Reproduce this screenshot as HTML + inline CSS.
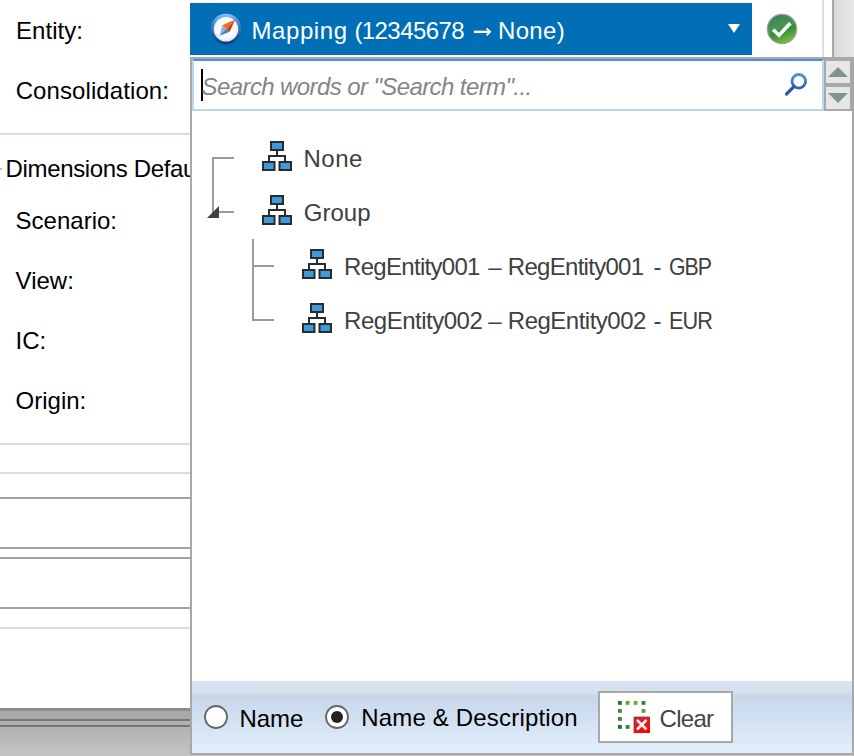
<!DOCTYPE html>
<html><head><meta charset="utf-8">
<style>
html,body{margin:0;padding:0;width:854px;height:756px;overflow:hidden;background:#fff;position:relative;font-family:"Liberation Sans",sans-serif;}
.a{position:absolute;}
.t{position:absolute;font-size:24px;line-height:24px;white-space:nowrap;}
.hl{position:absolute;left:0;width:190px;height:2px;}
</style></head><body>
<!-- left panel -->
<div class="t" style="left:16px;top:19px;color:#000;letter-spacing:0.05px">Entity:</div>
<div class="t" style="left:15.7px;top:79px;color:#000;letter-spacing:0.09px">Consolidation:</div>
<div class="hl" style="top:133px;background:#d5dee5"></div>
<div class="a" style="left:0;top:168px;width:2px;height:2px;background:#b8c4cc"></div>
<div class="t" style="left:5.6px;top:157px;color:#000;letter-spacing:-0.35px">Dimensions Defau</div>
<div class="t" style="left:15.6px;top:209px;color:#000">Scenario:</div>
<div class="t" style="left:15.6px;top:269px;color:#000">View:</div>
<div class="t" style="left:15.6px;top:329px;color:#000">IC:</div>
<div class="t" style="left:15.6px;top:389px;color:#000">Origin:</div>
<div class="hl" style="top:443px;background:#d5dee5"></div>
<div class="hl" style="top:472px;background:#d5dee5"></div>
<div class="hl" style="top:497px;background:#a2a2a2"></div>
<div class="hl" style="top:547px;background:#a2a2a2"></div>
<div class="hl" style="top:557px;background:#a2a2a2"></div>
<div class="hl" style="top:607px;background:#a2a2a2"></div>
<div class="hl" style="top:627px;background:#d5dee5"></div>
<div class="a" style="left:0;top:708px;width:190px;height:48px;background:linear-gradient(#8c8c8c 0,#8c8c8c 2.5px,#a9a9a9 3px,#a9a9a9 11px,#767676 11px,#767676 13px,#b0b0b0 13px,#b0b0b0 17px,#767676 17px,#767676 19px,#b2b2b2 19px,#c4c4c4 48px)"></div>

<!-- dropdown -->
<div class="a" style="left:190px;top:3px;width:562px;height:52px;background:#006fb6"></div>
<div class="t" style="left:251.4px;top:18.7px;color:#fff;letter-spacing:0.6px">Mapping</div>
<div class="t" style="left:354.4px;top:18.7px;color:#fff;letter-spacing:-0.575px">(12345678</div>
<svg class="a" style="left:473px;top:25px" width="19" height="14" viewBox="0 0 19 14"><path d="M0.8 6.85H17" stroke="#fff" stroke-width="2.4"/><path d="M13.6 3.4L17.2 6.85L13.6 10.3" fill="none" stroke="#fff" stroke-width="1.8"/></svg>
<div class="t" style="left:498.1px;top:18.7px;color:#fff;letter-spacing:0.3px">None)</div>
<svg class="a" style="left:209px;top:12px" width="34" height="34" viewBox="0 0 34 34">
<defs><linearGradient id="cg" x1="0" y1="0" x2="0" y2="1"><stop offset="0" stop-color="#8ec4f4"/><stop offset="0.35" stop-color="#3f82cc"/><stop offset="1" stop-color="#0b3a7a"/></linearGradient>
<radialGradient id="cw" cx="50%" cy="45%" r="55%"><stop offset="0" stop-color="#ffffff"/><stop offset="0.75" stop-color="#f6f9fd"/><stop offset="1" stop-color="#d4e4f4"/></radialGradient></defs>
<circle cx="17" cy="17" r="15.3" fill="url(#cg)"/>
<circle cx="17" cy="17.3" r="12.3" fill="url(#cw)"/>
<polygon points="17,17 26.2,7.6 20.8,19.8" fill="#c2480c"/>
<polygon points="17,17 26.2,7.6 13.3,13.3" fill="#f86a18"/>
<polygon points="17,17 10.6,23.8 13.3,13.3" fill="#8ab8ea"/>
<polygon points="17,17 10.6,23.8 20.8,19.8" fill="#4a7cc0"/>
</svg>
<svg class="a" style="left:766px;top:13px" width="32" height="32" viewBox="0 0 32 32">
<defs><linearGradient id="gg" x1="0.3" y1="0" x2="0.7" y2="1"><stop offset="0" stop-color="#3a8050"/><stop offset="0.45" stop-color="#4a9858"/><stop offset="0.55" stop-color="#2f8a35"/><stop offset="1" stop-color="#80c040"/></linearGradient></defs>
<circle cx="16" cy="16" r="15.3" fill="#8e8e8e" opacity="0.85"/>
<circle cx="16" cy="16" r="14" fill="url(#gg)"/>
<path d="M7.2 16.8L13 22.2L24.3 10.2" fill="none" stroke="#fff" stroke-width="3.6" stroke-linejoin="miter"/>
</svg>
<svg class="a" style="left:727px;top:23px" width="14" height="11"><polygon points="1,1 13,1 7,10" fill="#fff"/></svg>

<!-- right side -->
<div class="a" style="left:822px;top:0;width:2px;height:57px;background:#d4dfe6"></div>
<div class="a" style="left:832px;top:0;width:2px;height:57px;background:#a8a8a8"></div>
<div class="a" style="left:834px;top:0;width:20px;height:57px;background:linear-gradient(90deg,#d9d9d9,#e8e8e8)"></div>

<!-- popup -->
<div class="a" style="left:190px;top:57px;width:660px;height:694px;border:2px solid #a8a8a8;background:#fff"></div>
<div class="a" style="left:192px;top:59px;width:628px;height:48px;border:2px solid #b9d9ef;border-top-color:#4f8fc7;background:#fff"></div>
<div class="a" style="left:824px;top:59px;width:28px;height:52px;background:#a8a8a8"></div>
<div class="a" style="left:826px;top:61px;width:24px;height:22px;background:#e6e6e6"></div>
<div class="a" style="left:826px;top:87px;width:24px;height:22px;background:#e6e6e6"></div>
<svg class="a" style="left:826px;top:61px" width="24" height="48"><polygon points="2,16 22,16 12,6" fill="#7f9391"/><polygon points="2,32 22,32 12,42" fill="#7f9391"/></svg>
<svg class="a" style="left:782px;top:70px" width="28" height="28" viewBox="0 0 28 28">
<defs><linearGradient id="mg" x1="0" y1="0" x2="0" y2="1"><stop offset="0" stop-color="#4a98d8"/><stop offset="1" stop-color="#2f5fb8"/></linearGradient></defs>
<circle cx="16.8" cy="11.3" r="6.8" fill="none" stroke="url(#mg)" stroke-width="2.8"/>
<path d="M4.5 24L11.5 17" stroke="#2c58a8" stroke-width="3.2" stroke-linecap="round"/>
</svg>
<div class="a" style="left:201px;top:69px;width:2px;height:32px;background:#000"></div>
<div class="t" style="left:201.6px;top:75px;color:#858585;font-style:italic;letter-spacing:-0.6px">Search words or "Search term"...</div>


<!-- tree -->
<div class="a" style="left:212px;top:157px;width:2px;height:55px;background:#9a9a9a"></div>
<div class="a" style="left:212px;top:157px;width:22px;height:2px;background:#9a9a9a"></div>
<div class="a" style="left:212px;top:211px;width:22px;height:2px;background:#9a9a9a"></div>
<svg class="a" style="left:206px;top:205px" width="14" height="14"><polygon points="1,13 13,1 13,13" fill="#404040"/></svg>
<div class="a" style="left:252px;top:239px;width:2px;height:82px;background:#9a9a9a"></div>
<div class="a" style="left:252px;top:265px;width:22px;height:2px;background:#9a9a9a"></div>
<div class="a" style="left:252px;top:319px;width:22px;height:2px;background:#9a9a9a"></div>
<svg class="a" style="left:262px;top:141px" width="30" height="30" viewBox="0 0 30 30"><g fill="#3d9bdb" stroke="#2b2b2b" stroke-width="2"><rect x="9" y="1" width="12" height="8"/><rect x="1" y="21" width="11.5" height="8"/><rect x="17.5" y="21" width="11.5" height="8"/></g><g fill="#2b2b2b"><rect x="14" y="10" width="2" height="5"/><rect x="6" y="14" width="18" height="2"/><rect x="6" y="14" width="2" height="6"/><rect x="22" y="14" width="2" height="6"/></g></svg><svg class="a" style="left:262px;top:195px" width="30" height="30" viewBox="0 0 30 30"><g fill="#3d9bdb" stroke="#2b2b2b" stroke-width="2"><rect x="9" y="1" width="12" height="8"/><rect x="1" y="21" width="11.5" height="8"/><rect x="17.5" y="21" width="11.5" height="8"/></g><g fill="#2b2b2b"><rect x="14" y="10" width="2" height="5"/><rect x="6" y="14" width="18" height="2"/><rect x="6" y="14" width="2" height="6"/><rect x="22" y="14" width="2" height="6"/></g></svg><svg class="a" style="left:302px;top:249px" width="30" height="30" viewBox="0 0 30 30"><g fill="#3d9bdb" stroke="#2b2b2b" stroke-width="2"><rect x="9" y="1" width="12" height="8"/><rect x="1" y="21" width="11.5" height="8"/><rect x="17.5" y="21" width="11.5" height="8"/></g><g fill="#2b2b2b"><rect x="14" y="10" width="2" height="5"/><rect x="6" y="14" width="18" height="2"/><rect x="6" y="14" width="2" height="6"/><rect x="22" y="14" width="2" height="6"/></g></svg><svg class="a" style="left:302px;top:303px" width="30" height="30" viewBox="0 0 30 30"><g fill="#3d9bdb" stroke="#2b2b2b" stroke-width="2"><rect x="9" y="1" width="12" height="8"/><rect x="1" y="21" width="11.5" height="8"/><rect x="17.5" y="21" width="11.5" height="8"/></g><g fill="#2b2b2b"><rect x="14" y="10" width="2" height="5"/><rect x="6" y="14" width="18" height="2"/><rect x="6" y="14" width="2" height="6"/><rect x="22" y="14" width="2" height="6"/></g></svg>
<div class="t" style="left:303.5px;top:147px;color:#404040;letter-spacing:0.5px">None</div>
<div class="t" style="left:303.8px;top:201px;color:#404040">Group</div>
<div class="t" style="left:344.1px;top:255px;color:#404040;letter-spacing:-0.71px">RegEntity001</div>
<div class="t" style="left:488.2px;top:255px;color:#404040">–</div>
<div class="t" style="left:507.8px;top:255px;color:#404040;letter-spacing:-0.71px">RegEntity001</div>
<div class="t" style="left:653.6px;top:255px;color:#404040">-</div>
<div class="t" style="left:669.4px;top:255px;color:#404040;letter-spacing:-1.2px;transform:scaleX(0.888);transform-origin:0 0">GBP</div>
<div class="t" style="left:344.1px;top:309px;color:#404040;letter-spacing:-0.49px">RegEntity002</div>
<div class="t" style="left:488.2px;top:309px;color:#404040">–</div>
<div class="t" style="left:507.8px;top:309px;color:#404040;letter-spacing:-0.5px">RegEntity002</div>
<div class="t" style="left:653.6px;top:309px;color:#404040">-</div>
<div class="t" style="left:669.2px;top:309px;color:#404040;letter-spacing:-1px;transform:scaleX(0.905);transform-origin:0 0">EUR</div>

<!-- footer -->
<div class="a" style="left:192px;top:681px;width:660px;height:72px;background:linear-gradient(#d8e3f0 0,#d4e0ee 12px,#c7d7ea 15px,#d3e1f2 40px,#e3eefb 72px)"></div>
<svg class="a" style="left:202px;top:703px" width="28" height="28"><circle cx="14" cy="14" r="11" fill="#fff" stroke="#666" stroke-width="1.8"/></svg>
<svg class="a" style="left:323px;top:703px" width="28" height="28"><circle cx="14" cy="14" r="11" fill="#fff" stroke="#666" stroke-width="1.8"/><circle cx="14" cy="14" r="6" fill="#222"/></svg>
<div class="t" style="left:239.4px;top:707px;color:#000">Name</div>
<div class="t" style="left:361.2px;top:706px;color:#000;letter-spacing:0.18px">Name &amp; Description</div>
<div class="a" style="left:598px;top:691px;width:131px;height:48px;border:2px solid #a8a8a8;background:#fff"></div>
<svg class="a" style="left:614px;top:697px" width="40" height="40" viewBox="0 0 40 40">
<defs><linearGradient id="rg" x1="0" y1="0" x2="0.5" y2="1"><stop offset="0" stop-color="#a8303c"/><stop offset="0.5" stop-color="#d42028"/><stop offset="1" stop-color="#ff0404"/></linearGradient>
<linearGradient id="dg" x1="0" y1="0" x2="1" y2="0"><stop offset="0" stop-color="#1a7a2a"/><stop offset="0.5" stop-color="#62aa38"/><stop offset="1" stop-color="#1f7d2c"/></linearGradient></defs>
<g>
<rect x="4" y="4" width="3.8" height="3.8" fill="#1d7a2a"/><rect x="11.7" y="4" width="3.8" height="3.8" fill="#5aa83a"/><rect x="19.7" y="4" width="3.8" height="3.8" fill="#62ac3a"/><rect x="27.6" y="4" width="3.8" height="3.8" fill="#2c8232"/>
<rect x="4" y="12" width="3.8" height="3.8" fill="#3a9035"/><rect x="27.6" y="12" width="3.8" height="3.8" fill="#55a23a"/>
<rect x="4" y="20" width="3.8" height="3.8" fill="#2f8a32"/>
<rect x="4" y="28" width="3.8" height="3.8" fill="#1a7828"/><rect x="11.7" y="28" width="3.8" height="3.8" fill="#2a8832"/>
</g>
<rect x="19.6" y="19.6" width="16.4" height="16.4" fill="url(#rg)"/>
<path d="M23 23L32.5 32.5M32.5 23L23 32.5" stroke="#fff" stroke-width="2.6" opacity="0.92"/>
</svg>
<div class="t" style="left:659.5px;top:707px;color:#444;letter-spacing:-0.7px">Clear</div>
<div class="a" style="left:190px;top:755px;width:664px;height:1px;background:#c4c4c4"></div>
</body></html>
